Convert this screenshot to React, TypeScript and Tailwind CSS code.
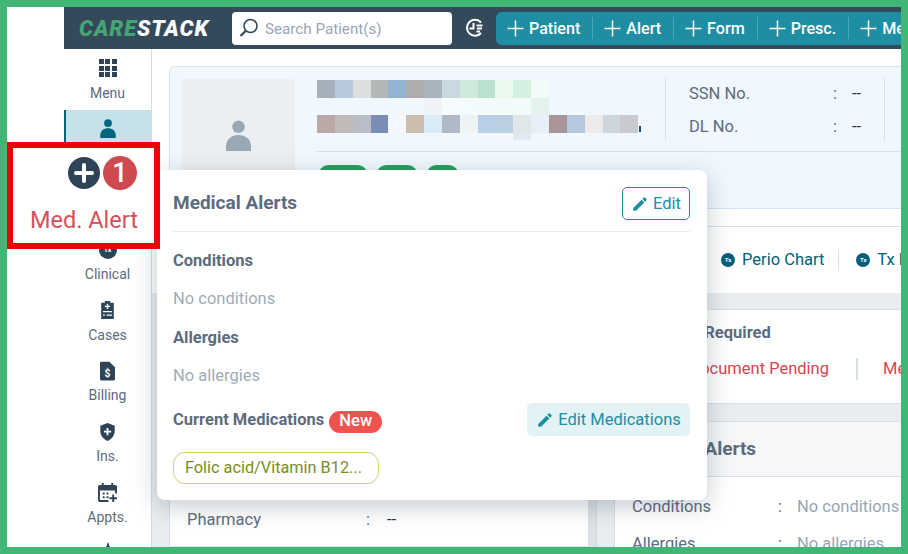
const f = "font-['Roboto',sans-serif]";

const PencilIcon = ({ className }: { className: string }) => (
  <svg viewBox="0 0 24 24" className={className} fill="currentColor">
    <path d="M3 17.25V21h3.75L17.81 9.94l-3.75-3.75L3 17.25zM20.71 7.04a1 1 0 0 0 0-1.41l-2.34-2.34a1 1 0 0 0-1.41 0l-1.83 1.83 3.75 3.75 1.83-1.83z" />
  </svg>
);

const PersonIcon = ({ className }: { className: string }) => (
  <svg viewBox="0 0 26 32" className={className} fill="currentColor">
    <circle cx="13" cy="7" r="6.5" />
    <path d="M0 32v-5C0 20 6 15.5 13 15.5S26 20 26 27v5z" />
  </svg>
);

const Plus = () => (
  <svg viewBox="0 0 16 16" className="h-[17px] w-[17px] shrink-0" stroke="currentColor" strokeWidth="1.4" fill="none">
    <path d="M8 .5v15M.5 8h15" />
  </svg>
);

const Tx = () => (
  <span className="flex h-[14px] w-[14px] shrink-0 items-center justify-center rounded-full bg-[#01607a] text-[6px] font-bold leading-none text-white">Tx</span>
);

const MenuGrid = () => (
  <div className="grid h-[18px] w-[18px] grid-cols-3 gap-[1.5px]">
    {Array.from({ length: 9 }).map((_, i) => <span key={i} className="bg-[#2f4356]" />)}
  </div>
);

const CasesIcon = () => (
  <svg viewBox="0 0 16 20" className="h-[18px] w-[15px]" fill="#2f4356">
    <path d="M1 2h4V0h6v2h4v18H1z" />
    <path d="M7.2 3h1.6v2.2H11v1.6H8.8V9H7.2V6.8H5V5.200H7.200z M3 11h10v1.500H3z M3 15h2v1.500H3z M7 15h6v1.500H7z" fill="#fff" />
  </svg>
);
const BillIcon = () => (
  <svg viewBox="0 0 16 20" className="h-5 w-[15px]" fill="#2f4356">
    <path d="M0 1.500A1.500 1.500 0 0 1 1.500 0H10l6 6v12.500a1.500 1.500 0 0 1-1.500 1.500h-13A1.500 1.500 0 0 1 0 18.500z" />
    <text x="8" y="16" textAnchor="middle" fontSize="11" fontWeight="700" fill="#fff" fontFamily="Roboto">$</text>
  </svg>
);
const ShieldIcon = () => (
  <svg viewBox="0 0 16 20" className="h-[18px] w-[15px]" fill="#2f4356">
    <path d="M8 0l8 3v6c0 5-3.500 9-8 11C3.500 18 0 14 0 9V3z" />
    <path d="M7 5.500h2V8.500h3v2H9v3H7v-3H4v-2h3z" fill="#fff" />
  </svg>
);
const CalIcon = () => (
  <svg viewBox="0 0 20 20" className="h-[19px] w-[19px]" fill="#2f4356">
    <path d="M4 0h2v2h8V0h2v2h2a2 2 0 0 1 2 2v7h-2V8H2v10h9v2H2a2 2 0 0 1-2-2V4a2 2 0 0 1 2-2h2z" />
    <path d="M5 10h2v2H5zM9 10h2v2H9zM5 14h2v2H5zM9 14h2v2H9zM15 12h2v3h3v2h-3v3h-2v-3h-3v-2h3z" />
  </svg>
);

const SideItem = ({ icon, label, active }: { icon: React.ReactNode; label: string; active?: boolean }) => (
  <div className={`flex h-[60.6px] shrink-0 flex-col items-center pt-[8px] ${active ? "border-l-2 border-[#00667e] bg-[#c5e2e8] pr-[2px]" : ""}`}>
    <div className="flex h-[22px] items-center justify-center">{icon}</div>
    <div className="mt-[3.5px] text-[14px] leading-[20px] text-[#5c6c7e]">{label}</div>
  </div>
);

const row1 = ["#a6b0ba", "#b8c9dc", "#dcdfdf", "#b3b7b7", "#92b4d2", "#aeadae", "#a9b4bf", "#cad8e0", "#cfe9dd", "#b8e2cf", "#e9f9ec", "#d3f0e1", "#f3fbf8"];
const rowMid = ["#f0f3f5", "#f6fbfe", "#f3fbfc", "#f2fafb", "#f2fbfa", "#f3fbfa", "#e3f2ef"];
const row2 = ["#b9aaa8", "#c1b8b8", "#b9bdc8", "#7a8db7", "#f4f8fe", "#cbbcae", "#daebf8", "#afbac6", "#eef3f4", "#b9cfe7", "#bccfe1", "#e0e7ea", "#e7f0f8", "#a99598", "#b6c8df", "#ecebe9", "#cdd6dd", "#cac9cf"];

const Seg = ({ label, last }: { label: string; last?: boolean }) => (
  <div className={`flex h-[22px] shrink-0 items-center gap-[5px] pl-[11px] pr-[12px] ${last ? "" : "border-r border-[#4aa6b8]"}`}>
    <Plus />
    <span className="pt-[2px]">{label}</span>
  </div>
);

const Pill = ({ w }: { w: string }) => <div className={`h-[22px] rounded-full bg-[#2a9d5c] ${w}`} />;

export default function App() {
  return (
    <div className={`relative h-[554px] w-[908px] overflow-hidden border-[7px] border-[#41b677] bg-white ${f}`}>
      <div className="flex h-full w-full pl-[57px]">
        <div className="flex min-w-0 flex-1 flex-col">
          {/* header */}
          <header className="flex h-[42px] shrink-0 items-center overflow-hidden bg-[#34495a] pl-[15px]">
            <div className="w-[153px] shrink-0 whitespace-nowrap pt-[2px] text-[22px] font-black italic leading-none tracking-[0.9px]">
              <span className="text-[#46a574]">CARE</span><span className="text-white">STACK</span>
            </div>
            <div className="flex h-[33px] w-[220px] shrink-0 items-center gap-[6px] rounded-[4px] bg-white pl-[7px] text-[15.2px] text-[#98a6b5]">
              <svg viewBox="0 0 20 20" className="h-[20px] w-[20px]" fill="none" stroke="#34495a" strokeWidth="1.600">
                <circle cx="11.500" cy="8" r="6.500" />
                <path d="M6.800 12.700L1.500 18" strokeWidth="2.200" />
              </svg>
              <span className="pt-[2px]">Search Patient(s)</span>
            </div>
            <div className="flex w-[44px] shrink-0 justify-center">
              <svg viewBox="0 0 20 20" className="h-[20px] w-[20px]" fill="none" stroke="#fff" strokeWidth="2">
                <path d="M17 4.500A8 8 0 1 0 17 15" />
                <path d="M9.500 5v5.500H5.500M12.500 7.500h6M13 10.500h5M12.500 13.500h3.500" />
              </svg>
            </div>
            <div className="flex h-[33px] min-w-0 flex-1 items-center overflow-hidden rounded-l-[6px] bg-[#1e8ea3] text-[16.1px] font-medium text-white">
              <Seg label="Patient" />
              <Seg label="Alert" />
              <Seg label="Form" />
              <Seg label="Presc." />
              <Seg label="Medications" last />
            </div>
          </header>

          <div className="flex min-h-0 flex-1">
            {/* sidebar */}
            <nav className="flex w-[88px] shrink-0 flex-col overflow-hidden border-r border-[#d6dce3] bg-white">
              <SideItem icon={<MenuGrid />} label="Menu" />
              <SideItem active icon={<PersonIcon className="h-[19px] w-[16px] text-[#00667e]" />} label="Profile" />
              <SideItem icon={<span />} label="Med. Alert" />
              <SideItem icon={<div className="flex h-[18px] w-[18px] items-center justify-center rounded-full bg-[#2f4356] text-[7px] font-bold text-white">Tx</div>} label="Clinical" />
              <SideItem icon={<CasesIcon />} label="Cases" />
              <SideItem icon={<BillIcon />} label="Billing" />
              <SideItem icon={<ShieldIcon />} label="Ins." />
              <SideItem icon={<CalIcon />} label="Appts." />
              <SideItem icon={<svg viewBox="0 0 22 22" className="h-[22px] w-[22px]" fill="#2f4356"><path d="M11 0l8 22H3z" /></svg>} label="More" />
            </nav>

            {/* main */}
            <main className="flex min-w-0 flex-1 flex-col overflow-hidden">
              <div className="shrink-0 bg-white pl-[17px] pt-[17px]">
                <section className="flex h-[143px] rounded-l-[6px] border border-r-0 border-[#d5e3f5] bg-[#f0f7fe] pl-[12px] pt-[12px]">
                  <div className="flex h-[118px] w-[113px] shrink-0 items-start justify-center rounded-[4px] bg-[#ebeff2] pt-[41px]">
                    <PersonIcon className="h-[31px] w-[25px] text-[#98a8b5]" />
                  </div>
                  <div className="flex min-w-0 flex-1 flex-col pl-[22px]">
                    <div className="flex w-full border-b border-[#d8dfe8] pb-[4px]">
                      <div className="w-[348px] shrink-0 pt-[1px]">
                        <div className="flex h-[18px]">
                          {row1.map((c, i) => <span key={i} className="h-[18px] w-[17.850px]" style={{ backgroundColor: c }} />)}
                        </div>
                        <div className="flex h-[17px] pl-[107px]">
                          {rowMid.map((c, i) => <span key={i} className="h-[17px] w-[17.850px]" style={{ backgroundColor: c }} />)}
                        </div>
                        <div className="flex h-[18px]">
                          {row2.map((c, i) => <span key={i} className="h-[18px] w-[17.850px]" style={{ backgroundColor: c }} />)}
                          <span className="ml-[1px] mt-[11px] h-[6px] w-[1.500px] bg-[#1f4a78]" />
                        </div>
                        <div className="flex h-[7px] pl-[178px]">
                          <span className="h-[7px] w-[18px] bg-[#f3f7f9]" />
                          <span className="h-[7px] w-[18px] bg-[#e3e9f3]" />
                        </div>
                      </div>
                      <div className="-mt-[2px] mb-[7px] flex h-[63px] w-[220px] shrink-0 flex-col gap-[13px] border-x border-[#d8dfe8] pl-[23px] pt-[7px] text-[16.5px] leading-[20px] text-[#5c6c7e]">
                        <div className="flex"><span className="w-[144px]">SSN No.</span><span className="w-[19px]">:</span><span className="text-[#22303c]">--</span></div>
                        <div className="flex"><span className="w-[144px]">DL No.</span><span className="w-[19px]">:</span><span className="text-[#22303c]">--</span></div>
                      </div>
                    </div>
                    <div className="mt-[13px] flex gap-[8px] pl-[1px]">
                      <Pill w="w-[50px]" />
                      <Pill w="w-[42px]" />
                      <Pill w="w-[33px]" />
                    </div>
                  </div>
                </section>
              </div>

              <div className="mt-[17px] flex h-[67px] shrink-0 items-center justify-end border-t border-[#d8dfe8] bg-white text-[16.5px] text-[#01607a]">
                <div className="flex w-[180px] shrink-0 items-center gap-[7px] overflow-hidden whitespace-nowrap">
                  <Tx /><span>Perio Chart</span>
                  <span className="ml-[7px] mr-[10px] h-[22px] shrink-0 border-l border-[#d8dfe8]" />
                  <Tx /><span>Tx Plan</span>
                </div>
              </div>

              <div className="flex min-h-0 flex-1 gap-[17px] overflow-hidden bg-[#e9edf0] pl-[17px] pt-[16px]">
                <div className="-mt-[16px] flex shrink-0 pt-[16px]">
                  <div className="w-[420px] shrink-0 self-stretch border border-[#d8dfe8] bg-white pl-[17px]">
                    <div className="flex h-[20px] text-[16.5px] leading-[20px] text-[#5c6c7e]" style={{ marginTop: 200 }}>
                      <span className="w-[179px]">Pharmacy</span><span className="w-[21px]">:</span><span className="text-[#22303c]">--</span>
                    </div>
                  </div>
                  <div className="w-[8px] shrink-0 border-r border-[#d3d9df] bg-[#dde1e5]" />
                </div>
                <div className="flex min-w-0 flex-1 flex-col gap-[17px]">
                  <div className="h-[95px] shrink-0 overflow-hidden border-y border-l border-[#d8dfe8] bg-white pl-[20px]">
                    <div className="pl-[17px] pt-[13px] text-[16.5px] font-bold leading-[20px] text-[#5c6c7e]">Action Required</div>
                    <div className="mt-[15px] flex items-center whitespace-nowrap text-[16.5px] leading-[22px] text-[#d5454f]">
                      <span className="w-[221px] shrink-0 pr-[27px] text-right">Document Pending</span>
                      <span className="h-[22px] shrink-0 border-l-2 border-[#d8dfe8]" />
                      <span className="pl-[25px]">Medical Alert</span>
                    </div>
                  </div>
                  <div className="min-h-0 flex-1 overflow-hidden border-l border-t border-[#d8dfe8] bg-white">
                    <div className="flex h-[55px] items-center border-b border-[#d8dfe8] bg-[#f5f7f9] pl-[17px] text-[19px] font-bold text-[#5c6c7e]">Medical Alerts</div>
                    <div className="flex pl-[17px] pt-[20px] text-[16.5px] leading-[20px]">
                      <span className="w-[146px] text-[#5c6c7e]">Conditions</span><span className="w-[19px] text-[#5c6c7e]">:</span><span className="whitespace-nowrap text-[#98a6b5]">No conditions</span>
                    </div>
                    <div className="flex pl-[17px] pt-[17px] text-[16.5px] leading-[20px]">
                      <span className="w-[146px] text-[#5c6c7e]">Allergies</span><span className="w-[19px] text-[#5c6c7e]">:</span><span className="whitespace-nowrap text-[#98a6b5]">No allergies</span>
                    </div>
                  </div>
                </div>
              </div>
            </main>
          </div>
        </div>
      </div>

      {/* popover */}
      <div className="absolute left-[150px] top-[163px] flex h-[330px] w-[550px] flex-col rounded-[8px] bg-white pl-[16px] pr-[17px] shadow-[0_6px_24px_rgba(40,60,80,0.28)]">
        <div className="flex h-[62px] shrink-0 items-end justify-between border-b border-[#e8ebee] pb-[11px]">
          <span className="relative -top-[6px] text-[19px] font-bold leading-[22px] text-[#5c6c7e]">Medical Alerts</span>
          <button className="flex h-[33px] w-[68px] items-center justify-center gap-[4px] rounded-[5px] border border-[#1e8ea3] text-[16.5px] text-[#1e8ea3]">
            <PencilIcon className="h-[18px] w-[18px]" /><span className="pt-[1px]">Edit</span>
          </button>
        </div>
        <div className="mt-[19px] text-[16.5px] font-bold leading-[20px] text-[#5c6c7e]">Conditions</div>
        <div className="mt-[18px] text-[16.5px] leading-[20px] text-[#a0adb8]">No conditions</div>
        <div className="mt-[19px] text-[16.5px] font-bold leading-[20px] text-[#5c6c7e]">Allergies</div>
        <div className="mt-[18px] text-[16.5px] leading-[20px] text-[#a0adb8]">No allergies</div>
        <div className="mt-[17px] flex items-center justify-between">
          <div className="flex items-center gap-[5px]">
            <span className="text-[16.5px] font-bold leading-[20px] text-[#5c6c7e]">Current Medications</span>
            <span className="mt-[4px] flex h-[22px] w-[53px] items-center justify-center rounded-full bg-[#ef5350] text-[16.5px] font-medium text-white">New</span>
          </div>
          <button className="flex h-[33px] w-[163px] items-center justify-center gap-[4px] rounded-[5px] bg-[#e2f2f5] text-[16.5px] text-[#1e8ea3]">
            <PencilIcon className="h-[18px] w-[18px]" /><span className="pt-[1px]">Edit Medications</span>
          </button>
        </div>
        <div className="mt-[16px] flex h-[32px] w-[206px] items-center rounded-[12px] border border-[#c8d670] pl-[11px] text-[16.300px] text-[#7b8d23]">Folic acid/Vitamin B12...</div>
      </div>

      {/* red annotation box */}
      <div className="absolute left-0 top-[135px] flex h-[107px] w-[153px] flex-col border-[6px] border-[#e90606] bg-white">
        <div className="flex items-center gap-[3px] pl-[55px] pt-[8px]">
          <svg viewBox="0 0 32 32" className="h-[32px] w-[32px]">
            <circle cx="16" cy="16" r="16" fill="#2f4356" />
            <path d="M16 8v16M8 16h16" stroke="#fff" strokeWidth="4" strokeLinecap="round" />
          </svg>
          <span className="flex h-[34px] w-[34px] items-center justify-center rounded-full bg-[#cf4a4e] text-[27px] font-medium text-white">1</span>
        </div>
        <div className="mt-[15px] whitespace-nowrap pl-[17px] text-[23.500px] leading-[30px] text-[#d5505a]">Med. Alert</div>
      </div>
    </div>
  );
}
